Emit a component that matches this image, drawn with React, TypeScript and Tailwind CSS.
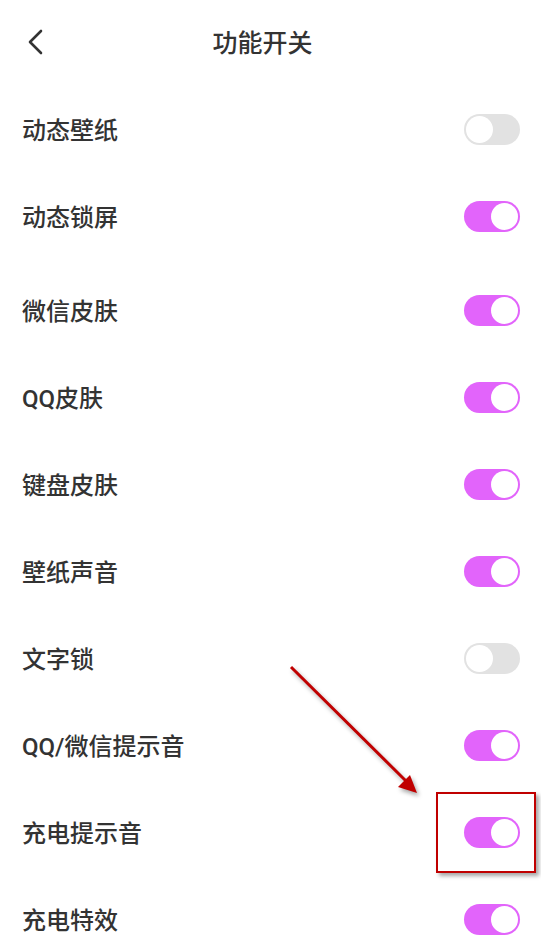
import React from "react";

const items: { label: string; on: boolean }[] = [
  { label: "动态壁纸", on: false },
  { label: "动态锁屏", on: true },
  { label: "微信皮肤", on: true },
  { label: "QQ皮肤", on: true },
  { label: "键盘皮肤", on: true },
  { label: "壁纸声音", on: true },
  { label: "文字锁", on: false },
  { label: "QQ/微信提示音", on: true },
  { label: "充电提示音", on: true },
  { label: "充电特效", on: true },
];

function Toggle({ on }: { on: boolean }) {
  return (
    <div
      className={`flex h-[31px] w-[56px] items-center rounded-full px-[2px] ${
        on ? "justify-end bg-[#e264fb]" : "justify-start bg-[#e2e2e2]"
      }`}
    >
      <div className="h-[27px] w-[27px] rounded-full bg-white" />
    </div>
  );
}

function Row({ label, on }: { label: string; on: boolean }) {
  return (
    <div className="flex h-[87px] items-center justify-between pl-[22px] pr-[21px]">
      <span className="pt-[3px] text-[24px] font-medium text-[#333333]">{label}</span>
      <Toggle on={on} />
    </div>
  );
}

export default function App() {
  return (
    <div
      className="relative h-[935px] w-full overflow-hidden bg-white"
      style={{ fontFamily: 'Roboto, "Noto Sans CJK SC", "Noto Sans", sans-serif' }}
    >
      <header className="relative flex h-[86px] items-center justify-center pr-[16px]">
        <button className="absolute left-[26px] top-[28px] flex h-[28px] w-[18px] items-center justify-center">
          <svg width="18" height="28" viewBox="0 0 18 28" fill="none">
            <path
              d="M15 3 L4 14 L15 25"
              stroke="#333333"
              strokeWidth="2.6"
              strokeLinecap="round"
              strokeLinejoin="round"
            />
          </svg>
        </button>
        <h1 className="pt-[2px] text-[25px] font-medium text-[#333333]">功能开关</h1>
      </header>

      <div className="flex flex-col">
        {items.slice(0, 2).map((it) => (
          <Row key={it.label} {...it} />
        ))}
        <div className="h-[7px]" />
        {items.slice(2).map((it) => (
          <Row key={it.label} {...it} />
        ))}
      </div>

      {/* annotation */}
      <div className="pointer-events-none absolute left-[436px] top-[792px] h-[81px] w-[100px] border-2 border-[#c00000] shadow-[3px_3px_4px_rgba(0,0,0,0.35)]" />
      <svg
        className="pointer-events-none absolute left-0 top-0"
        width="541"
        height="935"
        style={{ filter: "drop-shadow(2px 3px 2px rgba(0,0,0,0.35))" }}
      >
        <line x1="291" y1="667" x2="406" y2="781" stroke="#c00000" strokeWidth="3" />
        <polygon points="417,793 398,787 404,781 410,775" fill="#c00000" />
      </svg>
    </div>
  );
}
